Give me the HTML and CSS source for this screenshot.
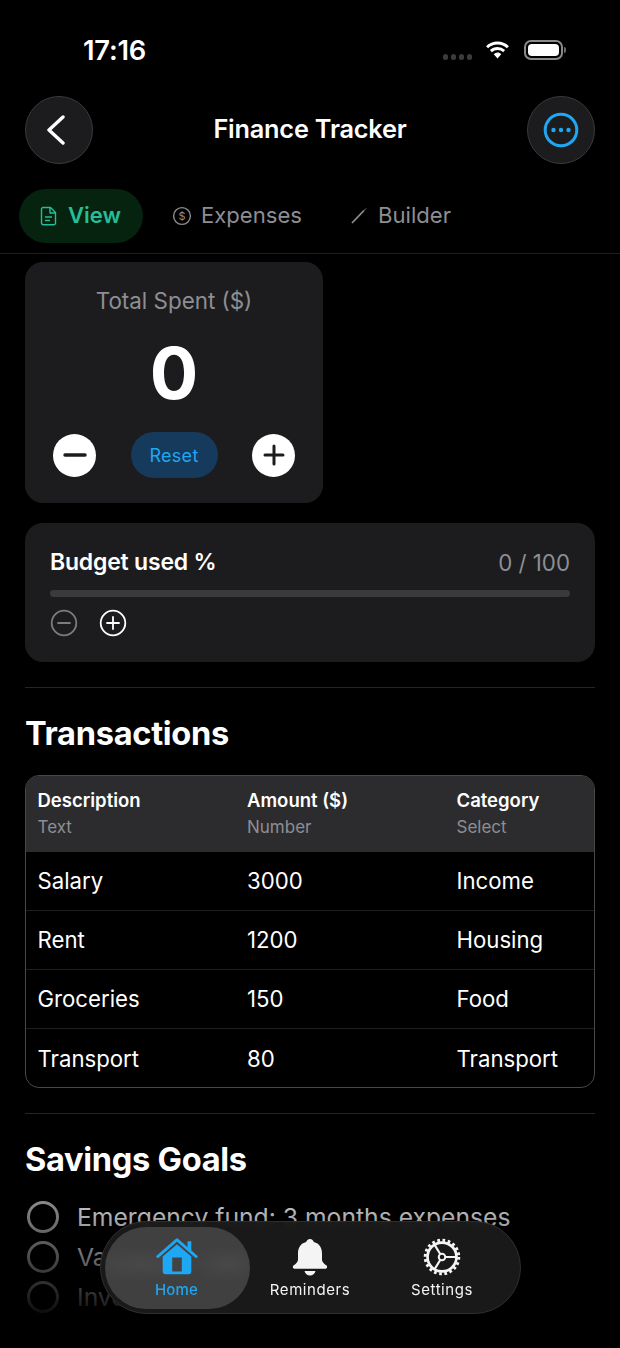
FILE: index.html
```html
<!DOCTYPE html>
<html lang="en">
<head>
<meta charset="utf-8">
<title>Finance Tracker</title>
<link rel="stylesheet" href="styles.css">
</head>
<body>
<div class="screen">
  <div class="status">
    <span class="time">17:16</span>
    <div class="status-right">
      <div class="signal"><i></i><i></i><i></i><i></i></div>
      <svg class="wifi" width="27" height="20" viewBox="0 0 26 19"><path d="M13 4.200c3.500 0 6.700 1.300 9.100 3.600l1.900-2A16 16 0 0 0 13 1.400 16 16 0 0 0 2 5.800l1.900 2A13.200 13.200 0 0 1 13 4.200zm0 5.300c2.100 0 4 .8 5.400 2.100l1.900-2A10.700 10.700 0 0 0 13 6.700c-2.800 0-5.400 1.100-7.300 2.900l1.900 2A8 8 0 0 1 13 9.500zm3.600 4-3.600 4.300-3.600-4.300A5.400 5.400 0 0 1 13 12c1.400 0 2.700.6 3.600 1.500z" fill="#fff"/></svg>
      <div class="battery"><div class="battery-fill"></div></div>
      <div class="battery-cap"></div>
    </div>
  </div>

  <header class="header">
    <button class="round-btn">
      <svg class="chevron" width="24" height="34" viewBox="0 0 24 34"><path d="M16 4 2 17l14 13" fill="none" stroke="#fff" stroke-width="3.400" stroke-linecap="round" stroke-linejoin="round"/></svg>
    </button>
    <h1 class="title">Finance Tracker</h1>
    <button class="round-btn">
      <svg width="36" height="36" viewBox="0 0 36 36"><circle cx="18" cy="18" r="15.800" fill="none" stroke="#1ea7f2" stroke-width="3"/><circle cx="10.500" cy="18" r="2.200" fill="#1ea7f2"/><circle cx="18" cy="18" r="2.200" fill="#1ea7f2"/><circle cx="25.500" cy="18" r="2.200" fill="#1ea7f2"/></svg>
    </button>
  </header>

  <nav class="tabs">
    <div class="tab tab-active">
      <svg width="18" height="20" viewBox="0 0 18 20"><path d="M3 1.500h7.500L15.500 6.500V17a1.800 1.800 0 0 1-1.800 1.800H3.300A1.800 1.800 0 0 1 1.500 17V3A1.500 1.500 0 0 1 3 1.500zM10 1.500V7h5.500M5 11h7M5 14.500h5" fill="none" stroke="#27bd97" stroke-width="1.400" stroke-linejoin="round"/></svg>
      <span class="tab-label">View</span>
    </div>
    <div class="tab tab-exp">
      <svg width="20" height="20" viewBox="0 0 20 20"><circle cx="10" cy="10" r="8.400" fill="none" stroke="#8e8e93" stroke-width="1.400"/><text x="10" y="14" class="dollar" text-anchor="middle">$</text></svg>
      <span class="tab-label">Expenses</span>
    </div>
    <div class="tab tab-build">
      <svg width="18" height="18" viewBox="0 0 18 18"><path d="M2 16 14 3.500" fill="none" stroke="#8e8e93" stroke-width="1.800"/><path d="M14 3.500 16 1.500" fill="none" stroke="#8e8e93" stroke-width="1"/></svg>
      <span class="tab-label">Builder</span>
    </div>
  </nav>

  <main class="content">
    <section class="counter-card">
      <div class="counter-label">Total Spent ($)</div>
      <div class="counter-value">0</div>
      <div class="counter-actions">
        <button class="circle-btn"><svg width="24" height="24" viewBox="0 0 24 24"><path d="M2 12h20" stroke="#1c1c1e" stroke-width="3.400" stroke-linecap="round"/></svg></button>
        <button class="reset-btn">Reset</button>
        <button class="circle-btn"><svg width="24" height="24" viewBox="0 0 24 24"><path d="M3 12h18M12 3v18" stroke="#1c1c1e" stroke-width="3" stroke-linecap="round"/></svg></button>
      </div>
    </section>

    <section class="progress-card">
      <div class="progress-head">
        <span class="progress-title">Budget used %</span>
        <span class="progress-num">0 / 100</span>
      </div>
      <div class="progress-track"></div>
      <div class="progress-actions">
        <svg width="28" height="28" viewBox="0 0 28 28"><circle cx="14" cy="14" r="12.300" fill="none" stroke="#7c7c80" stroke-width="1.800"/><path d="M8 14h12" stroke="#7c7c80" stroke-width="1.800" stroke-linecap="round"/></svg>
        <svg width="28" height="28" viewBox="0 0 28 28"><circle cx="14" cy="14" r="12.300" fill="none" stroke="#fff" stroke-width="1.800"/><path d="M8 14h12M14 8v12" stroke="#fff" stroke-width="1.800" stroke-linecap="round"/></svg>
      </div>
    </section>

    <hr class="divider">
    <h2 class="section-title">Transactions</h2>

    <div class="table">
      <div class="row row-head">
        <div class="cell"><b>Description</b><small>Text</small></div>
        <div class="cell"><b>Amount ($)</b><small>Number</small></div>
        <div class="cell"><b>Category</b><small>Select</small></div>
      </div>
      <div class="row"><div class="cell">Salary</div><div class="cell">3000</div><div class="cell">Income</div></div>
      <div class="row"><div class="cell">Rent</div><div class="cell">1200</div><div class="cell">Housing</div></div>
      <div class="row"><div class="cell">Groceries</div><div class="cell">150</div><div class="cell">Food</div></div>
      <div class="row"><div class="cell">Transport</div><div class="cell">80</div><div class="cell">Transport</div></div>
    </div>

    <hr class="divider">
    <h2 class="section-title section-title-goals">Savings Goals</h2>

    <ul class="goals">
      <li class="goal"><span class="check"></span>Emergency fund: 3 months expenses</li>
      <li class="goal"><span class="check"></span>Vacation fund</li>
      <li class="goal"><span class="check"></span>Invest in a retirement</li>
    </ul>
  </main>

  <div class="fade"></div>

  <div class="dock">
    <div class="dock-glass"></div>
    <div class="dock-lens"></div>
    <div class="dock-item dock-active">
      <svg width="42" height="38" viewBox="0 0 44 42" preserveAspectRatio="none"><path d="M2 20.500 22 2l20 18.500" fill="none" stroke="#1ea7f2" stroke-width="3.200" stroke-linecap="round" stroke-linejoin="round"/><path d="M33 3.500h4v11l-4-3.500z" fill="#1ea7f2"/><path fill-rule="evenodd" d="M22 7 7 20.500V37a3 3 0 0 0 3 3h24a3 3 0 0 0 3-3V20.500zM17 21.500h10V37H17z" fill="#1ea7f2"/></svg>
      <span>Home</span>
    </div>
    <div class="dock-item">
      <svg width="36" height="38" viewBox="0 0 36 42" preserveAspectRatio="none"><path d="M18 1c2 0 3.500 1.500 3.800 3.500C27.500 6 30 11 30 17v7c0 2.500 2 4.500 4.500 6.500.9.8 1 3.500-1 3.500h-31c-2 0-1.900-2.700-1-3.500C4 28.500 6 26.500 6 24v-7C6 11 8.500 6 14.200 4.500 14.500 2.500 16 1 18 1z" fill="#f4f4f4"/><path d="M12.500 36.500h11c-.5 3-2.800 5-5.500 5s-5-2-5.500-5z" fill="#f4f4f4"/></svg>
      <span>Reminders</span>
    </div>
    <div class="dock-item">
      <svg width="38" height="38" viewBox="0 0 42 42"><circle cx="21" cy="21" r="16" fill="none" stroke="#f4f4f4" stroke-width="3"/><circle cx="21" cy="21" r="18.500" fill="none" stroke="#f4f4f4" stroke-width="3.400" stroke-dasharray="3 2.810"/><circle cx="21" cy="21" r="3.600" fill="none" stroke="#f4f4f4" stroke-width="2.200"/><path d="M24.600 21H37M19.200 17.900 12.500 7M19.200 24.100 12.500 35" stroke="#f4f4f4" stroke-width="2.400" fill="none"/></svg>
      <span>Settings</span>
    </div>
  </div>
</div>
</body>
</html>
```
FILE: styles.css
```css
* { box-sizing: border-box; }
html, body { margin: 0; padding: 0; background: #000; }
body { font-family: Inter, "Liberation Sans", sans-serif; color: #fff; }
.screen { position: relative; width: 620px; height: 1348px; overflow: hidden; background: #000; }

.status { height: 96px; padding: 0 54px 0 83px; display: flex; justify-content: space-between; align-items: flex-start; }
.time { margin-top: 36px; font-size: 27.300px; line-height: 30px; font-weight: 600; letter-spacing: -0.2px; }
.status-right { display: flex; align-items: center; margin-top: 40px; }
.signal { display: flex; gap: 2.500px; margin-right: 12px; margin-top: 14px; }
.signal i { width: 5.500px; height: 5.500px; border-radius: 50%; background: #3c3c3e; }
.wifi { margin-right: 13px; }
.battery { width: 39px; height: 20px; border: 2px solid #8a8a8a; border-radius: 7px; padding: 2px; }
.battery-fill { width: 100%; height: 100%; background: #fff; border-radius: 4px; }
.battery-cap { width: 2px; height: 6px; background: #6b6b6b; margin-left: 1px; border-radius: 0 2px 2px 0; }

.header { height: 68px; margin: 0 25px; display: flex; align-items: center; justify-content: space-between; }
.round-btn { width: 68px; height: 68px; border-radius: 50%; background: #1c1c1e; border: 1.500px solid #3a3a3c; padding: 0; display: flex; align-items: center; justify-content: center; }
.chevron { margin-left: -1px; }
.title { margin: -2px 0 0; font-size: 25.300px; line-height: 32px; font-weight: 600; letter-spacing: -0.2px; }

.tabs { margin-top: 25px; height: 65px; padding: 0 19px; display: flex; align-items: flex-start; border-bottom: 1px solid #1f1f21; }
.tab { height: 54px; display: flex; align-items: center; gap: 9px; font-size: 22.100px; color: #8e8e93; border-radius: 27px; }
.tab-label { margin-top: -2px; }
.tab-active { width: 124px; padding-left: 21px; gap: 10px; background: #05230f; color: #27bd97; font-weight: 600; font-size: 22px; }
.tab-exp { margin-left: 29px; }
.tab-build { margin-left: 48px; gap: 10px; }
.dollar { font-size: 11px; fill: #8e8e93; font-family: Inter, sans-serif; }

.content { padding: 8px 25px 0; }
.counter-card { width: 298px; height: 241px; background: #1c1c1e; border-radius: 18px; padding-top: 25px; display: flex; flex-direction: column; align-items: center; }
.counter-label { font-size: 22.400px; line-height: 28px; color: #8e8e93; }
.counter-value { margin-top: 18px; font-size: 72px; line-height: 80px; font-weight: 700; }
.counter-actions { margin-top: 19px; width: 100%; padding: 0 28px; display: flex; align-items: center; justify-content: space-between; }
.circle-btn { width: 43px; height: 43px; border-radius: 50%; background: #fff; border: 0; padding: 0; display: flex; align-items: center; justify-content: center; }
.reset-btn { width: 87px; height: 46px; border-radius: 23px; background: #153a5b; border: 0; color: #1ea7f2; font: 400 18px Inter, sans-serif; letter-spacing: 0.3px; }

.progress-card { margin-top: 20px; height: 139px; background: #1c1c1e; border-radius: 18px; padding: 23px 25px 0; }
.progress-head { display: flex; justify-content: space-between; align-items: center; height: 32px; }
.progress-title { font-size: 23px; font-weight: 600; letter-spacing: -0.2px; }
.progress-num { font-size: 22.300px; color: #8e8e93; }
.progress-track { margin-top: 12px; height: 7px; border-radius: 4px; background: #3a3a3c; }
.progress-actions { margin-top: 12px; display: flex; gap: 21px; }

.divider { margin: 25px 0 0; border: 0; border-top: 1px solid #252527; }
.section-title { margin: 25px 0 22px; font-size: 32.600px; line-height: 40px; font-weight: 700; letter-spacing: -0.3px; }
.section-title-goals { margin-bottom: 18px; }

.table { height: 313px; border: 1.500px solid #48484a; border-radius: 14px; overflow: hidden; }
.row { height: 59px; padding: 0 11px 1px 11.500px; display: grid; grid-template-columns: 209.500px 209.500px 1fr; align-items: center; font-size: 22.200px; border-bottom: 1px solid #1f1f21; }
.row:last-child { border-bottom: 0; }
.row-head { height: 76px; background: #2c2c2e; border-bottom: 0; }
.cell b { display: block; margin-top: -3px; font-size: 18.500px; line-height: 24px; font-weight: 600; }
.cell small { display: block; margin-top: 5px; font-size: 17px; line-height: 20px; color: #8e8e93; }

.goals { list-style: none; padding: 0; margin: 0; }
.goal { height: 40px; display: flex; align-items: center; gap: 18px; padding-left: 2px; font-size: 24.700px; color: #c7c7cc; }
.check { width: 32px; height: 32px; border-radius: 50%; border: 3px solid #8a8a8e; flex: none; }

.fade { position: absolute; left: 0; right: 0; top: 1200px; height: 148px; background: linear-gradient(to bottom, rgba(0,0,0,0) 0, rgba(0,0,0,.85) 72%, #000 85%); pointer-events: none; }

.dock { position: absolute; left: 100px; top: 1221px; width: 421px; height: 93px; display: grid; grid-template-columns: 143px 124px 140px; align-items: center; padding-left: 5px; }
.dock-glass { position: absolute; inset: 0; border-radius: 47px; background: rgba(26,26,26,.95); border: 1.500px solid #2f2f2f; backdrop-filter: blur(3px); }
.dock-lens { position: absolute; left: 5px; top: 6px; width: 145px; height: 82px; border-radius: 41px; background: radial-gradient(ellipse 60px 18px at 25% 45%, #484848, transparent), radial-gradient(ellipse 40px 18px at 85% 45%, #484848, transparent), #404040; }
.dock-item { position: relative; display: flex; flex-direction: column; align-items: center; gap: 5px; padding-top: 1px; font-size: 15px; line-height: 18px; font-weight: 400; color: #f4f4f4; letter-spacing: 0.55px; }
.dock-item svg { display: block; }
.dock-active { color: #1ea7f2; font-weight: 500; letter-spacing: 0.2px; }
```
